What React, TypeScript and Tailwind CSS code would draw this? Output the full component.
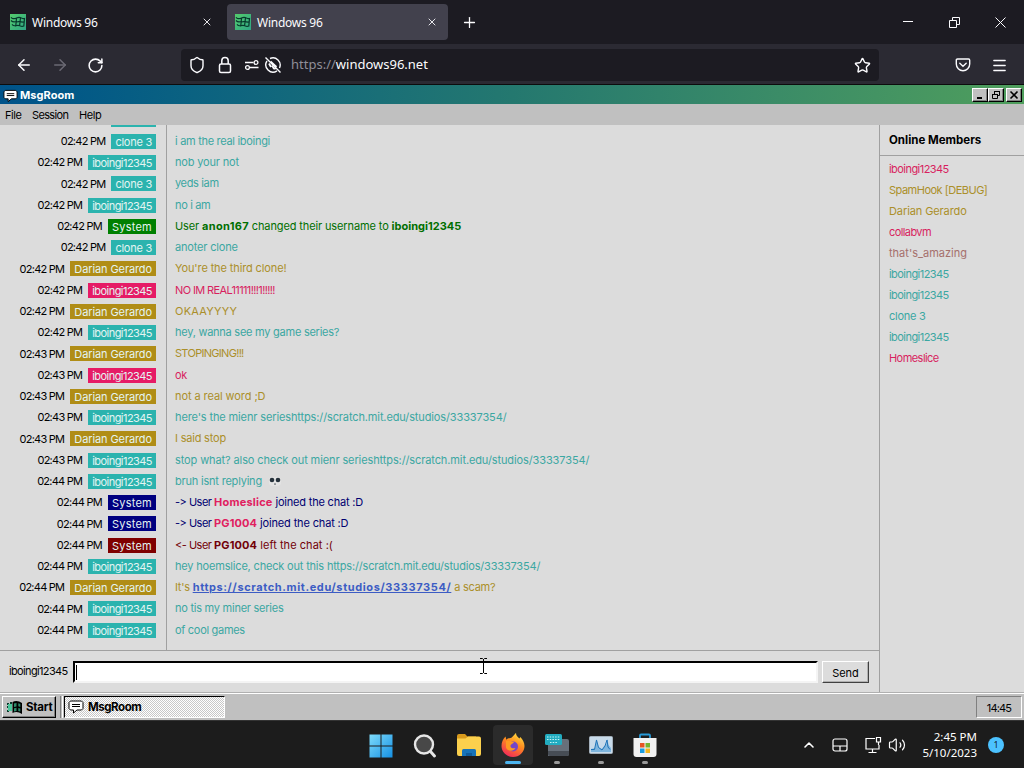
import { clsx } from "clsx";
import {
  ArrowLeft,
  ArrowRight,
  ChevronUp,
  Lock,
  Menu,
  Plus,
  RotateCw,
  Shield,
  Star,
  Volume2,
  X,
} from "lucide-react";
import type { ReactNode } from "react";

type Tone = "teal" | "gold" | "pink" | "green" | "navy" | "maroon" | "brown";

const badgeTones: Record<Tone, string> = {
  teal: "bg-[#2bb3ae]",
  gold: "bg-[#b08d16]",
  pink: "bg-[#e61b66]",
  green: "bg-[#008000]",
  navy: "bg-[#000080]",
  maroon: "bg-[#800000]",
  brown: "bg-[#a5605c]",
};

const textTones: Record<Tone, string> = {
  teal: "text-[#3ba7a2]",
  gold: "text-[#ab8f2a]",
  pink: "text-[#d81f5f]",
  green: "text-[#006f00]",
  navy: "text-[#000070]",
  maroon: "text-[#720008]",
  brown: "text-[#a5706c]",
};

// letter spacing per nickname
const nameTracking: Record<string, string> = {
  iboingi12345: "tracking-[-0.55px]",
  System: "tracking-[0.25px]",
  "Darian Gerardo": "tracking-[-0.1px]",
  "SpamHook [DEBUG]": "tracking-[-0.5px]",
  collabvm: "tracking-[-0.6px]",
  "that's_amazing": "tracking-[0px]",
  Homeslice: "tracking-[-0.55px]",
};

type Message = {
  time: string;
  user: string;
  tone: Tone;
  body: ReactNode;
  tracking?: string;
};

const messages: Message[] = [
  { time: "02:42 PM", user: "clone 3", tone: "teal", body: "i am the real iboingi", tracking: "tracking-[-0.3px]" },
  { time: "02:42 PM", user: "iboingi12345", tone: "teal", body: "nob your not", tracking: "tracking-[-0.17px]" },
  { time: "02:42 PM", user: "clone 3", tone: "teal", body: "yeds iam", tracking: "tracking-[-0.35px]" },
  { time: "02:42 PM", user: "iboingi12345", tone: "teal", body: "no i am", tracking: "tracking-[-0.35px]" },
  {
    time: "02:42 PM",
    user: "System",
    tone: "green",
    tracking: "tracking-[-0.12px]",
    body: (
      <>
        User <b className="tracking-[0.3px]">anon167</b> changed their username to{" "}
        <b className="tracking-[0px]">iboingi12345</b>
      </>
    ),
  },
  { time: "02:42 PM", user: "clone 3", tone: "teal", body: "anoter clone", tracking: "tracking-[-0.17px]" },
  { time: "02:42 PM", user: "Darian Gerardo", tone: "gold", body: "You're the third clone!", tracking: "tracking-[-0.12px]" },
  { time: "02:42 PM", user: "iboingi12345", tone: "pink", body: "NO IM REAL11111!!!1!!!!!", tracking: "tracking-[-0.63px]" },
  { time: "02:42 PM", user: "Darian Gerardo", tone: "gold", body: "OKAAYYYY", tracking: "tracking-[0.25px]" },
  { time: "02:42 PM", user: "iboingi12345", tone: "teal", body: "hey, wanna see my game series?" },
  { time: "02:43 PM", user: "Darian Gerardo", tone: "gold", body: "STOPINGING!!!", tracking: "tracking-[-0.7px]" },
  { time: "02:43 PM", user: "iboingi12345", tone: "pink", body: "ok" },
  { time: "02:43 PM", user: "Darian Gerardo", tone: "gold", body: "not a real word ;D", tracking: "tracking-[-0.08px]" },
  {
    time: "02:43 PM",
    user: "iboingi12345",
    tone: "teal",
    tracking: "tracking-[-0.125px]",
    body: "here's the mienr serieshttps://scratch.mit.edu/studios/33337354/",
  },
  { time: "02:43 PM", user: "Darian Gerardo", tone: "gold", body: "I said stop", tracking: "tracking-[-0.2px]" },
  {
    time: "02:43 PM",
    user: "iboingi12345",
    tone: "teal",
    tracking: "tracking-[-0.11px]",
    body: "stop what? also check out mienr serieshttps://scratch.mit.edu/studios/33337354/",
  },
  {
    time: "02:44 PM",
    user: "iboingi12345",
    tone: "teal",
    tracking: "tracking-[-0.2px]",
    body: (
      <>
        bruh isnt replying <Skull />
      </>
    ),
  },
  {
    time: "02:44 PM",
    user: "System",
    tone: "navy",
    tracking: "tracking-[-0.2px]",
    body: (
      <>
        <span className="tracking-[-0.5px]">-&gt; User </span>
        <b className="tracking-[0.2px] text-[#e0205f]">Homeslice</b> joined the chat :D
      </>
    ),
  },
  {
    time: "02:44 PM",
    user: "System",
    tone: "navy",
    tracking: "tracking-[-0.15px]",
    body: (
      <>
        <span className="tracking-[-0.5px]">-&gt; User </span>
        <b className="tracking-[0.1px] text-[#e0205f]">PG1004</b> joined the chat :D
      </>
    ),
  },
  {
    time: "02:44 PM",
    user: "System",
    tone: "maroon",
    tracking: "tracking-[0.05px]",
    body: (
      <>
        <span className="tracking-[-0.5px]">&lt;- User </span>
        <b className="tracking-[0.1px]">PG1004</b> left the chat :(
      </>
    ),
  },
  {
    time: "02:44 PM",
    user: "iboingi12345",
    tone: "teal",
    tracking: "tracking-[-0.18px]",
    body: "hey hoemslice, check out this https://scratch.mit.edu/studios/33337354/",
  },
  {
    time: "02:44 PM",
    user: "Darian Gerardo",
    tone: "gold",
    body: (
      <>
        It's{" "}
        <b className="tracking-[0.61px] text-[#3c5cc4] underline">
          https://scratch.mit.edu/studios/33337354/
        </b>{" "}
        a scam?
      </>
    ),
  },
  { time: "02:44 PM", user: "iboingi12345", tone: "teal", body: "no tis my miner series" },
  { time: "02:44 PM", user: "iboingi12345", tone: "teal", body: "of cool games", tracking: "tracking-[-0.3px]" },
];

const members: { name: string; tone: Tone }[] = [
  { name: "iboingi12345", tone: "pink" },
  { name: "SpamHook [DEBUG]", tone: "gold" },
  { name: "Darian Gerardo", tone: "gold" },
  { name: "collabvm", tone: "pink" },
  { name: "that's_amazing", tone: "brown" },
  { name: "iboingi12345", tone: "teal" },
  { name: "iboingi12345", tone: "teal" },
  { name: "clone 3", tone: "teal" },
  { name: "iboingi12345", tone: "teal" },
  { name: "Homeslice", tone: "pink" },
];

function Skull() {
  return (
    <svg width="14" height="11" viewBox="0 0 14 11" className="ml-[3px] inline-block align-[-2px]">
      <rect x="1" y="1" width="12" height="9" rx="4" fill="#e4e4e4" />
      <circle cx="4" cy="4" r="2.3" fill="#26323c" />
      <circle cx="10" cy="4" r="2.3" fill="#26323c" />
      <path d="M6 8.5 7 7l1 1.5z" fill="#26323c" />
    </svg>
  );
}

const Favicon = () => (
  <svg width="16" height="16" viewBox="0 0 16 16">
    <defs>
      <linearGradient id="fav" x1="0" y1="0" x2="1" y2="1">
        <stop offset="0" stopColor="#54cc6c" />
        <stop offset="1" stopColor="#2fa585" />
      </linearGradient>
    </defs>
    <rect width="16" height="16" fill="url(#fav)" />
    <path
      d="M6.500 4c2-1 3.500-.8 5 0 1.200.6 2 .7 3 .5L13.800 12c-1.500.6-2.800.3-4-.3-1.300-.6-2.500-.6-4 .1zM10.500 3.800 9.600 11.500M6.200 8c2.500-1 5-.3 8 .3M1 3.300C2.500 5 4.500 5 6.500 4M1 6.500C2.500 8 4 8.200 6 7.500M2 10.300c1 1.200 2.500 1.700 3.800 1.300"
      fill="none"
      stroke="#07382c"
      strokeWidth="1.200"
    />
  </svg>
);

const BrowserTab = ({ active }: { active?: boolean }) => (
  <div
    className={clsx(
      "flex h-9 w-[221px] items-center rounded pr-[10px] pl-2",
      active && "bg-[#42414d]",
    )}
  >
    <Favicon />
    <span className="mt-0.5 ml-1.5 flex-1 text-[12px] tracking-[-0.25px]">Windows 96</span>
    <X size={12} strokeWidth={1.8} />
  </div>
);

const Browser = () => (
  <div className="font-['Noto_Sans','Open_Sans',sans-serif] text-[#fbfbfe]">
    <div className="flex h-11 items-center bg-[#1c1b22] pl-0.5">
      <BrowserTab />
      <div className="w-1" />
      <BrowserTab active />
      <Plus size={17} strokeWidth={1.8} className="ml-[13px]" />
      <div className="ml-auto flex items-center gap-[35px] pr-[18px]">
        <svg width="11" height="11" viewBox="0 0 11 11" stroke="currentColor" fill="none">
          <path d="M0 4.500h10" />
        </svg>
        <svg width="11" height="11" viewBox="0 0 11 11" stroke="currentColor" fill="none">
          <path d="M.5 3.500h7v7h-7zM3.500 3V.5h7v7H8" />
        </svg>
        <svg width="11" height="11" viewBox="0 0 11 11" stroke="currentColor" fill="none">
          <path d="m.5.5 10 10m0-10-10 10" />
        </svg>
      </div>
    </div>
    <div className="flex h-[41px] items-center border-b border-[#0c0c0d] bg-[#2b2a33] pt-0.5 pl-[15px]">
      <ArrowLeft size={18} strokeWidth={2} />
      <ArrowRight size={18} strokeWidth={2} className="ml-[18px] text-[#6b6a74]" />
      <RotateCw size={17} strokeWidth={2.2} className="ml-[18px]" />
      <div className="ml-[77px] flex h-8 w-[698px] items-center rounded bg-[#1c1b22] pr-2 pl-[7px]">
        <Shield size={18} strokeWidth={1.9} />
        <svg
          width="14"
          height="18"
          viewBox="0 0 14 18"
          className="ml-[12px]"
          fill="none"
          stroke="currentColor"
          strokeWidth="1.500"
        >
          <rect x="1.500" y="8" width="11" height="8.500" rx="1.500" />
          <path d="M3.800 8V4.800a3.200 3.200 0 0 1 6.400 0V8" />
        </svg>
        <svg
          width="16"
          height="14"
          viewBox="0 0 16 14"
          className="ml-[12px]"
          fill="none"
          stroke="currentColor"
          strokeWidth="1.300"
        >
          <path d="M1 4.500h8.500M6 9.500h8.500" />
          <circle cx="12" cy="4.500" r="1.900" />
          <circle cx="3.500" cy="9.500" r="1.900" />
        </svg>
        <svg
          width="18"
          height="18"
          viewBox="0 0 18 18"
          className="ml-1"
          fill="none"
          stroke="currentColor"
          strokeWidth="1.400"
        >
          <path d="M6 2.500A7.200 7.200 0 0 1 15.500 12M13 14.900A7.200 7.200 0 0 1 3 5M1.500 1.500l15 15" />
          <path d="M6.500 5.500 12.500 11M5 7.500l2 3.500M8 9.500l1.500 2.500q1 1 2.500.3" strokeWidth="1.800" />
        </svg>
        <span className="ml-[9px] text-[13px] text-[#8f8e98]">
          https://<span className="text-[#fbfbfe]">windows96.net</span>
        </span>
        <Star size={17} strokeWidth={2} className="ml-auto" />
      </div>
      <svg
        width="16"
        height="14"
        viewBox="0 0 16 14"
        className="ml-[76px]"
        fill="none"
        stroke="currentColor"
        strokeWidth="1.400"
        strokeLinecap="round"
      >
        <path d="M2.500 1h11q1.200 0 1.200 1.200V6a6.700 6.700 0 0 1-13.400 0V2.200Q1.300 1 2.500 1zM4.800 5.200 8 8.200l3.200-3" />
      </svg>
      <Menu size={17} strokeWidth={1.9} className="ml-[20px]" />
    </div>
  </div>
);

const MsgIcon = ({ className }: { className?: string }) => (
  <svg width="16" height="14" viewBox="0 0 16 14" className={className}>
    <path
      d="M2.500 1h11l1.500 1.500v6L13.500 10H9l-3.500 3V10h-3L1 8.500v-6z"
      fill="#fff"
      stroke="#000"
    />
    <path d="M4 4.500h8M4 6.500h8" stroke="#000" />
  </svg>
);

const CaptionButton = ({ children, className }: { children: ReactNode; className?: string }) => (
  <button
    className={clsx(
      "flex h-3.5 w-4 items-center justify-center border border-t-white border-r-black border-b-black border-l-white bg-[#c0c0c0] shadow-[inset_-1px_-1px_0_#808080]",
      className,
    )}
  >
    <svg width="10" height="10" viewBox="0 0 10 10" fill="none" stroke="#000">
      {children}
    </svg>
  </button>
);

const TitleBar = () => (
  <div className="flex h-[19px] items-center bg-linear-to-r from-[#00538a] via-[#24786f] to-[#4f9e5c] pr-0.5 pl-[3px] text-white">
    <MsgIcon className="mt-0.5 h-[14px] w-[15px]" />
    <span className="mt-0.5 ml-0.5 flex-1 text-[11px] font-bold tracking-[0.05px]">MsgRoom</span>
    <CaptionButton>
      <path d="M2 8h5" strokeWidth="2" />
    </CaptionButton>
    <CaptionButton>
      <path d="M1.500 4.500h5v4h-5zM3.500 4V1.500h5v4H7M1 4.500h6M3 1.500h6" />
    </CaptionButton>
    <CaptionButton className="ml-0.5">
      <path d="m1.500 1.500 7 7m0-7-7 7" strokeWidth="1.600" />
    </CaptionButton>
  </div>
);

const Chat = () => (
  <div className="flex h-[525px] flex-col overflow-hidden">
    {/* bottom edge of the badge that is scrolled out */}
    <div className="flex h-[5.8px] w-[167px] shrink-0 justify-end border-r border-[#a0a0a0] pr-2.5">
      <div className="h-[1.5px] w-[45px] bg-[#2bb3ae]" />
    </div>
    {messages.map((msg, idx) => (
      <div key={idx} className="flex h-[21.26px] shrink-0">
        <div className="flex w-[167px] shrink-0 items-center justify-end border-r border-[#a0a0a0] pr-2.5">
          <span className="mr-[6px] tracking-[-0.75px] text-black">{msg.time}</span>
          <span
            className={clsx(
              "h-[15px] px-1 leading-[16px] text-[#e4f4f2]",
              badgeTones[msg.tone],
              nameTracking[msg.user],
            )}
          >
            {msg.user}
          </span>
        </div>
        <div
          className={clsx(
            "pl-2 leading-[21px] whitespace-nowrap",
            textTones[msg.tone],
            msg.tracking,
          )}
        >
          {msg.body}
        </div>
      </div>
    ))}
    <div className="w-[167px] flex-1 border-r border-[#a0a0a0]" />
  </div>
);

const Composer = () => (
  <div className="flex h-[42px] items-start border-t border-[#a0a0a0] pt-[10px] pl-[9px] text-black">
    <span className="w-16 leading-[21px] tracking-[-0.65px]">iboingi12345</span>
    <div className="flex h-[22px] w-[745px] items-center border-2 border-t-black border-r-[#f4f4f4] border-b-[#f4f4f4] border-l-black bg-white pl-px">
      <div className="h-[15px] w-px bg-black" />
    </div>
    <button className="ml-1 h-[22px] w-[47px] border border-t-white border-r-[#404040] border-b-[#404040] border-l-white bg-[#dcdcdc] pt-0.5 text-[11px] tracking-[-0.1px] shadow-[inset_-1px_-1px_0_#b0b0b0]">
      Send
    </button>
  </div>
);

const Members = () => (
  <div className="w-[145px] border-l border-[#a0a0a0]">
    <div className="h-[31px] border-b border-[#a0a0a0] pl-[9px] text-[11.5px] leading-[30px] font-bold tracking-[0px] text-black">
      Online Members
    </div>
    <div className="pt-[3px] pl-[9px]">
      {members.map((member, idx) => (
        <div
          key={idx}
          className={clsx(
            "h-[21px] leading-[21px]",
            textTones[member.tone],
            nameTracking[member.name],
          )}
        >
          {member.name}
        </div>
      ))}
    </div>
  </div>
);

const RetroTaskbar = () => (
  <div className="flex h-[27px] items-center border-t border-white bg-[#c0c0c0] pr-0.5 pl-0.5 text-black">
    <button className="flex h-[22px] w-[54px] items-center border border-t-white border-r-black border-b-black border-l-white pl-[3px] text-[11.5px] font-bold shadow-[inset_-1px_-1px_0_#808080]">
      <svg width="17" height="15" viewBox="0 0 17 15">
        <path d="M1 3h2v2H1zM4 2h2v2H4zM1 6h2v2H1zM4 5h2v2H4zM1 10h2v2H1zM4 9h2v2H4z" fill="#0b3a2c" />
        <path d="M2 4h4v7H2z" fill="#4cc79c" />
        <path d="M6.500 2q4.500-2.500 9.500 1v11q-5-3.500-9.500-1z" fill="#000" />
        <path d="M8 3.500 10.500 3v3.500L8 7zM12.300 3.200l2 .8v3l-2-.7zM8 8.300l2.500-.5V11L8 11.400zM12.300 8l2 .6v3l-2-.6z" fill="#2e8a6b" />
      </svg>
      <span className="mt-0.5 ml-[3px]">Start</span>
    </button>
    <div className="ml-1 h-[22px] w-[3px] border-r border-l border-r-white border-l-[#808080]" />
    <div className="ml-px flex h-[22px] w-[161px] items-center border border-t-black border-r-white border-b-white border-l-black bg-[repeating-conic-gradient(#fff_0_25%,#c8c8c8_0_50%)] bg-[length:2px_2px] pl-[3px] text-[11.5px] font-bold">
      <MsgIcon />
      <span className="mt-px ml-1 tracking-[-0.45px]">MsgRoom</span>
    </div>
    <div className="ml-auto flex h-[22px] w-[46px] items-center justify-center border border-t-[#808080] border-r-white border-b-white border-l-[#808080] pt-0.5 text-[11px] tracking-[-0.8px]">
      14:45
    </div>
  </div>
);

const DockItem = ({
  children,
  active,
  running,
}: {
  children: ReactNode;
  active?: boolean;
  running?: boolean;
}) => (
  <div
    className={clsx(
      "flex h-10 w-10 flex-col items-center rounded pt-2",
      active && "bg-[#2b2b2b]",
    )}
  >
    <svg width="26" height="26" viewBox="0 0 26 26" className="shrink-0">
      {children}
    </svg>
    {active && <div className="mt-0.5 h-[3px] w-4 shrink-0 rounded-full bg-[#4cb5f0]" />}
    {running && <div className="mt-0.5 h-[3px] w-1.5 shrink-0 rounded-full bg-[#9a9a9a]" />}
  </div>
);

const Dock = () => (
  <div className="flex h-12 items-center border-t border-[#333] bg-[#1c1c1c] pl-[361px] font-['Noto_Sans','Open_Sans',sans-serif]">
    <div className="flex gap-1">
      <DockItem>
        <linearGradient id="win" x1="0" y1="0" x2="1" y2="1">
          <stop offset="0" stopColor="#7fdcfb" />
          <stop offset="1" stopColor="#1590e4" />
        </linearGradient>
        <path
          d="M1.500 1.500h11v11h-11zM13.500 1.500h11v11h-11zM1.500 13.500h11v11h-11zM13.500 13.500h11v11h-11z"
          fill="url(#win)"
        />
      </DockItem>
      <DockItem>
        <circle cx="12" cy="11.500" r="9" fill="#484848" stroke="#e6e6e6" strokeWidth="2.400" />
        <path d="m18.500 18.500 4 4.500" stroke="#e6e6e6" strokeWidth="3" strokeLinecap="round" />
      </DockItem>
      <DockItem>
        <path d="M1 3q0-2 2-2h6l2.500 2.500H20V8H1z" fill="#d89a1c" />
        <path d="M1 5.500h8.500L12 3.500h11q2 0 2 2V21q0 2-2 2H3q-2 0-2-2z" fill="#fbd04d" />
        <path d="M6 23v-5.500Q6 16 7.500 16h11q1.500 0 1.500 1.500V23z" fill="#1773b8" />
        <path d="M10 20h6v3h-6z" fill="#0f5a98" />
      </DockItem>
      <DockItem active>
        <linearGradient id="ff" x1=".8" y1="0" x2=".3" y2="1">
          <stop offset="0" stopColor="#ffe444" />
          <stop offset=".45" stopColor="#ff8a1e" />
          <stop offset="1" stopColor="#f2295b" />
        </linearGradient>
        <path
          d="M16 0c0 3 2 4 3.500 5.500l.8-1.500c2.500 2.500 4.200 5.500 4.200 9a11.500 11 0 0 1-23 0c0-4 1.500-7 4-9.500l.8 3.300C7.200 5.500 8.500 5.300 9.500 5.300 12.500 5 13.500 2 16 0z"
          fill="url(#ff)"
        />
        <circle cx="13" cy="13.500" r="5" fill="#7546c9" />
        <path d="M6 8c3-1 5 .5 8 1-.5 2-3 1.500-3.500 3.500s2 3.500 5 2.500c-2 4-8 3.500-9.500-.5z" fill="#ff9a22" />
      </DockItem>
      <DockItem running>
        <path d="M4 8q0-2 2-2h17q2 0 2 2v13q0 2-2 2H4z" fill="#68707a" />
        <path d="M4 18h21v3q0 2-2 2H6q-2 0-2-2z" fill="#474d55" />
        <rect x="1" y="1" width="17" height="11" rx="1.500" fill="#22acc0" />
        <path
          d="M3 4h13M3 6.500h13M6 9.500h7"
          stroke="#c6f5f8"
          strokeWidth="1.200"
          strokeDasharray="1.500 1.200"
        />
      </DockItem>
      <DockItem running>
        <rect x="1.500" y="3.500" width="23" height="17" rx="1" fill="#c8dbea" stroke="#a4b0bb" />
        <path d="M3 19v-3l4-1 1.500-9 2 8 3.500 2 2-3 2-1 1.500-6 1 6 2.500 3v4z" fill="#7fb6de" />
        <path d="M3 16.500h3.500l2-9.500 2 7.500 3.500 2.500 3-4 2-6 1 7 2 2.500" fill="none" stroke="#1f74b8" />
      </DockItem>
      <DockItem running>
        <path
          d="M8 6V2.500Q8 1.500 9 1.500h8q1 0 1 1V6"
          fill="none"
          stroke="#279ad8"
          strokeWidth="1.800"
        />
        <path d="M1.500 5h23v16q0 3-3 3h-17q-3 0-3-3z" fill="#f1f1f1" />
        <path d="M8 10h4.500v4.500H8z" fill="#e65423" />
        <path d="M13.500 10H18v4.500h-4.500z" fill="#75b32e" />
        <path d="M8 15.500h4.500V20H8z" fill="#1a9ce0" />
        <path d="M13.500 15.500H18V20h-4.500z" fill="#f3b51e" />
      </DockItem>
    </div>
    <div className="ml-auto flex items-center pr-5 text-white">
      <ChevronUp size={16} strokeWidth={2.4} />
      <svg
        width="16"
        height="14"
        viewBox="0 0 16 14"
        className="ml-[15px]"
        fill="none"
        stroke="currentColor"
        strokeWidth="1.200"
      >
        <rect x="1" y="1" width="14" height="12" rx="2" />
        <path d="M1 8h14M8 8v5" />
      </svg>
      <svg
        width="18"
        height="18"
        viewBox="0 0 18 18"
        className="ml-4"
        fill="none"
        stroke="currentColor"
        strokeWidth="1.200"
      >
        <path d="M11 2.500H2v10.500h13V9M4.500 16.500h8M8.500 13v3.500M12.500 1.500h4v4.500h-4zM14.500 6v3" />
      </svg>
      <Volume2 size={18} strokeWidth={1.6} className="ml-1.5" />
      <div className="ml-[13px] w-[58px] text-right text-[11.5px] leading-4">
        <div>2:45 PM</div>
        <div>5/10/2023</div>
      </div>
      <div className="ml-[11px] flex h-4 w-4 items-center justify-center rounded-full bg-[#4cc2ff] text-[9px] text-[#123]">
        1
      </div>
    </div>
  </div>
);

export default function App() {
  return (
    <div className="relative h-[768px] w-[1024px] overflow-hidden bg-[#dcdcdc]">
      <Browser />
      <div className="font-[Inter,'Liberation_Sans',sans-serif] text-[11px] tracking-[-0.25px]">
        <TitleBar />
        <div className="flex h-[21px] items-center bg-[#c0c0c0] pt-px pl-[5px] text-[11px] tracking-[-0.4px] text-black">
          <span className="w-[27px]">File</span>
          <span className="w-[47px] tracking-[-0.65px]">Session</span>
          <span>Help</span>
        </div>
        <div className="flex h-[568px] border-b border-[#b0b0b0]">
          <div className="flex-1">
            <Chat />
            <Composer />
          </div>
          <Members />
        </div>
        <RetroTaskbar />
      </div>
      <Dock />
      {/* mouse cursor */}
      <svg
        width="9"
        height="16"
        viewBox="0 0 9 16"
        className="absolute top-[658px] left-[479px]"
        fill="none"
        stroke="#000"
      >
        <path d="M1 .5h2.500l1 1 1-1H8M4.500 1v14M1 15.500h2.500l1-1 1 1H8" />
      </svg>
    </div>
  );
}
